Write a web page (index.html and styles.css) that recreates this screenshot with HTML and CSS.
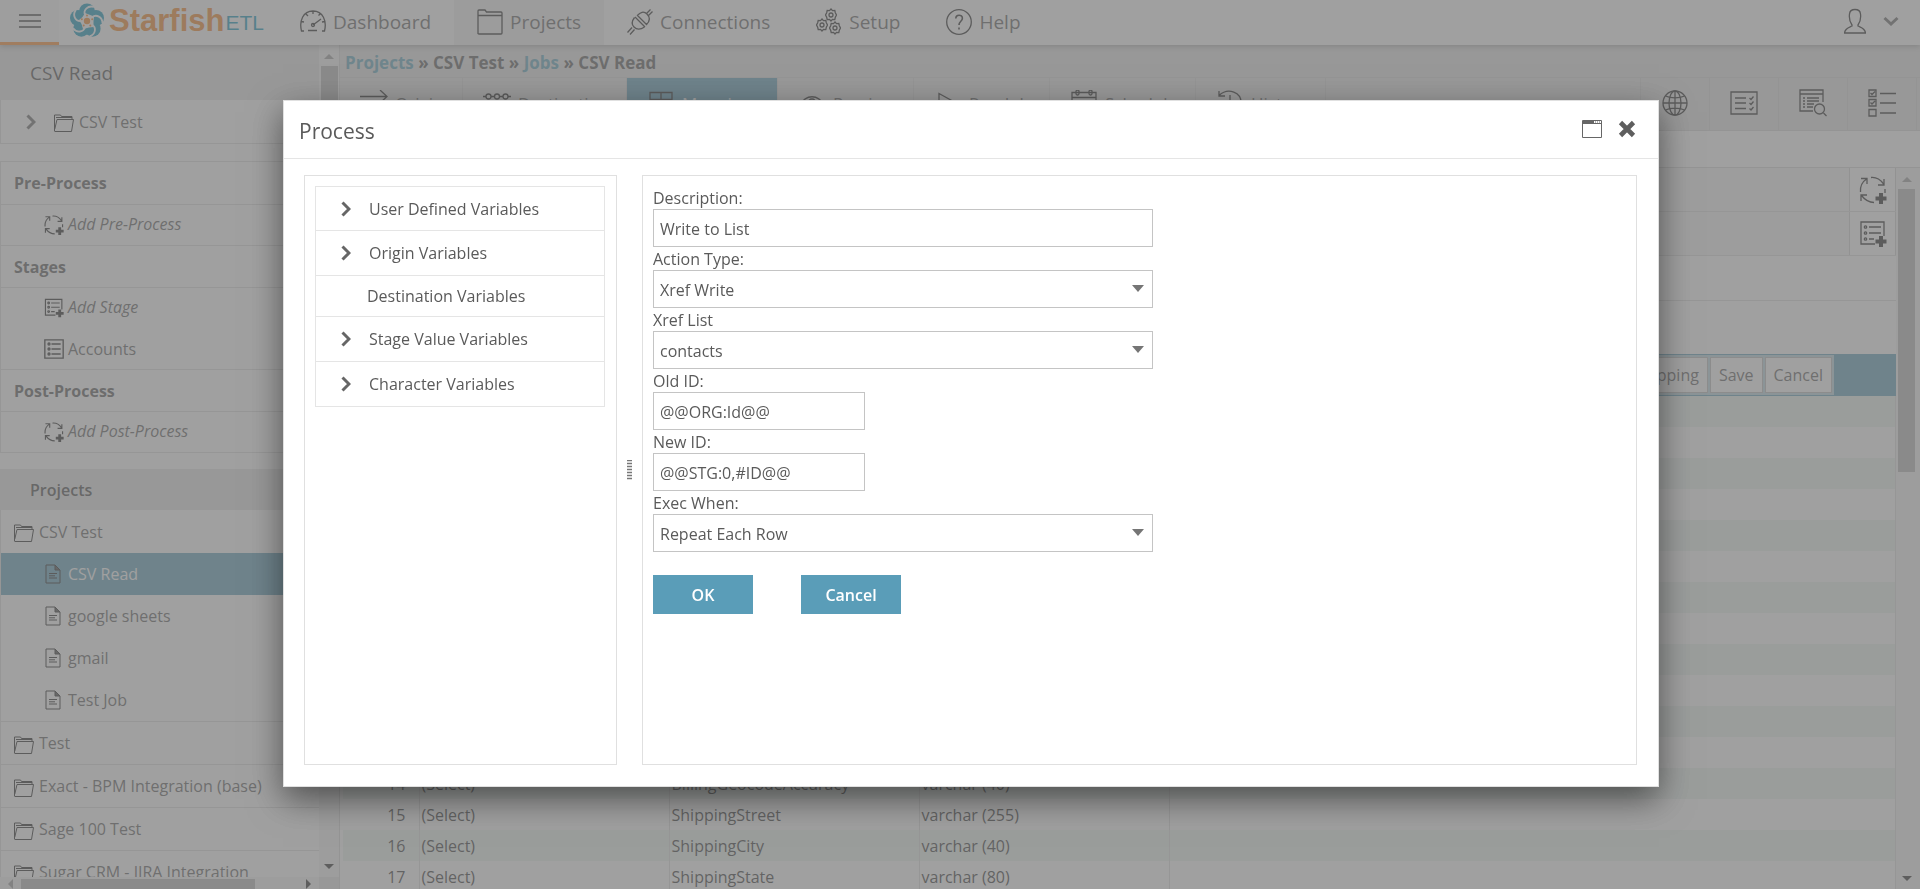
FILE: index.html
```html
<!DOCTYPE html>
<html lang="en">
<head>
<meta charset="utf-8">
<title>Starfish ETL - CSV Read</title>
<link rel="stylesheet" href="styles.css">
</head>
<body>
<svg class="defs" aria-hidden="true">
  <symbol id="i-folder" viewBox="0 0 20 18"><path d="M.5 17V1h6l1 1.500h10.500v3M.5 17.500h17L19.500 5.500H3L.8 15M2 3.500h16" /></symbol>
  <symbol id="i-doc" viewBox="0 0 16 20"><path d="M1 1h9l5 5v13H1zM4 9.500h8M4 11.800h6M4 14h8"/><path fill="#444" d="M10 1v5h5z"/></symbol>
  <symbol id="i-cycle" viewBox="0 0 28 28"><path d="M1.500 16C1 10 3 6 7.500 3M2 2.500h6v5.500M12 1.500c5-.5 9 1.500 12.500 6.500M25 3v6h-6M26 13v4M15 26.500C10 26.500 6 24 2.500 19.500M2 25v-6h6"/><path class="fat" d="M22 17v11M16.500 22.500h11"/></symbol>
  <symbol id="i-stage" viewBox="0 0 24 24"><path d="M1 1h22v22H1zM9 6h11M9 12h11M9 18h11"/><circle cx="6" cy="6" r="1.200"/><circle cx="6" cy="12" r="1.200"/><circle cx="6" cy="18" r="1.200"/></symbol>
  <symbol id="i-stage-add" viewBox="0 0 28 28"><path d="M25 16V2H2v22h14M10 7h12M10 13h12M10 19h5"/><circle cx="6.500" cy="7" r="1.200"/><circle cx="6.500" cy="13" r="1.200"/><circle cx="6.500" cy="19" r="1.200"/><path class="fat" d="M22 16v11M16.500 21.500h11"/></symbol>
  <symbol id="i-chev" viewBox="0 0 10 16"><path d="M1.500 1.500 8 8l-6.500 6.500"/></symbol>
  <symbol id="i-gear" viewBox="0 0 12 14"><path d="M6 1l1.500 1.600 2.300-.2.500 2.300L11.500 7l-1.200 2.300-.5 2.300-2.300-.2L6 13l-1.500-1.600-2.300.2-.5-2.300L.5 7l1.200-2.300.5-2.300 2.300.2z"/><circle cx="6" cy="7" r="2"/></symbol>
</svg>

<div class="app">
  <header class="topbar">
    <button class="menu" aria-label="Menu"><span></span><span></span><span></span></button>
    <a class="logo" href="#">
      <svg width="36" height="36" viewBox="-18 -18 36 36" aria-hidden="true">
        <g fill="#0c93ba">
          <circle r="12"/>
          <circle cx="0" cy="-9.500" r="8"/><circle cx="9" cy="-3" r="8"/><circle cx="5.600" cy="7.700" r="8"/><circle cx="-5.600" cy="7.700" r="8"/><circle cx="-9" cy="-3" r="8"/>
        </g>
        <g fill="none" stroke="#fff" stroke-width="1.800">
          <path id="arm" d="M-2-6C-4-11 1-16 7-14"/>
          <use href="#arm" transform="rotate(72)"/><use href="#arm" transform="rotate(144)"/><use href="#arm" transform="rotate(216)"/><use href="#arm" transform="rotate(288)"/>
        </g>
        <path fill="#fff" d="M-2-8 2-6.500 7-4.500 6.500 0 6.500 6 2 6.500-4 8-5.500 3-8-1-4.500-4z"/>
        <circle r="3.200" fill="#f58220"/>
        <g fill="#f58220"><circle cy="-5.500" r="1"/><circle cx="5.200" cy="-1.700" r="1"/><circle cx="3.300" cy="4.500" r="1"/><circle cx="-3.300" cy="4.500" r="1"/><circle cx="-5.200" cy="-1.700" r="1"/></g>
      </svg>
      <span class="logo-name">Starfish</span><span class="logo-etl">ETL</span>
    </a>
    <nav class="nav">
      <a href="#"><svg class="ic" width="26" height="26" viewBox="0 0 26 26"><path d="M4 22H1.500C-1 12 3 2 13 2s14 10 11.500 20H22M8 21.500h9M13 2v3M6 5l2 2M20 5l-1.500 1.500M1 12.500l3 .5M25 12.500l-3 .5M13 16l8-6"/><circle cx="13" cy="16" r="1.500"/></svg>Dashboard</a>
      <a href="#" class="on"><svg class="ic" width="26" height="26" viewBox="0 0 26 26"><path d="M1 25V2q0-1 1-1h6l1.500 2H24q1 0 1 1v20q0 1-1 1H2q-1 0-1-1M1 6.500h24"/></svg>Projects</a>
      <a href="#"><svg class="ic" width="26" height="26" viewBox="0 0 26 26"><path d="M8 8l10 10M10 6l10 10M10.500 6.500C13 3 17 2 20 5c3 3 3.500 6.500-.5 10.500M7.500 8.500c-3 4-3 7-.5 9.500s6 3 10.500 0M19 5l4.500-4.500M21 7l4.500-4.500M5 18.500.5 23.500M7.500 20.500 3 25.500"/></svg>Connections</a>
      <a href="#"><svg class="ic" width="26" height="28" viewBox="0 0 26 28"><use href="#i-gear" x="9" y="0" width="12" height="14"/><use href="#i-gear" x="0" y="10" width="12" height="14"/><use href="#i-gear" x="13" y="13" width="12" height="14"/></svg>Setup</a>
      <a href="#"><svg class="ic" width="26" height="26" viewBox="0 0 26 26"><circle cx="13" cy="13" r="12.300"/><path stroke-width="1.600" d="M9.800 9.500c0-4.500 6.600-4.300 6.600-.2 0 3-3.400 3-3.400 6.700M13 18.500v2"/></svg>Help</a>
    </nav>
    <button class="user" aria-label="Account">
      <svg class="ic" width="22" height="26" viewBox="0 0 22 26"><path d="M8 17C5 13 5 10 5.500 6c.5-6 10.500-6 11 0 .5 4 .5 7-2.500 11v1c3 1.500 7 2 7.500 7H.500C1 20 5 19.500 8 18z"/></svg>
      <svg class="down" width="16" height="12" viewBox="0 0 16 12"><path d="M1.500 3 8 9l6.500-6"/></svg>
    </button>
  </header>

  <div class="body">
    <aside class="side">
      <div class="side-scroll">
        <h2 class="band">CSV Read</h2>
        <div class="box first">
          <a href="#" class="row tree"><svg class="chev"><use href="#i-chev"/></svg><svg class="ic fold"><use href="#i-folder"/></svg>CSV Test</a>
        </div>
        <div class="box">
          <h3 class="row">Pre-Process</h3>
          <a href="#" class="row sub line"><svg class="ic s20"><use href="#i-cycle"/></svg><i>Add Pre-Process</i></a>
          <h3 class="row line">Stages</h3>
          <a href="#" class="row sub line"><svg class="ic s20"><use href="#i-stage-add"/></svg><i>Add Stage</i></a>
          <a href="#" class="row sub"><svg class="ic s20"><use href="#i-stage"/></svg>Accounts</a>
          <h3 class="row line">Post-Process</h3>
          <a href="#" class="row sub line"><svg class="ic s20"><use href="#i-cycle"/></svg><i>Add Post-Process</i></a>
        </div>
        <h2 class="band small">Projects</h2>
        <div class="projects">
          <a href="#" class="row proj"><svg class="ic fold"><use href="#i-folder"/></svg>CSV Test</a>
          <a href="#" class="row sub sel"><svg class="ic doc"><use href="#i-doc"/></svg>CSV Read</a>
          <a href="#" class="row sub"><svg class="ic doc"><use href="#i-doc"/></svg>google sheets</a>
          <a href="#" class="row sub"><svg class="ic doc"><use href="#i-doc"/></svg>gmail</a>
          <a href="#" class="row sub"><svg class="ic doc"><use href="#i-doc"/></svg>Test Job</a>
          <a href="#" class="row proj line"><svg class="ic fold"><use href="#i-folder"/></svg>Test</a>
          <a href="#" class="row proj line"><svg class="ic fold"><use href="#i-folder"/></svg>Exact - BPM Integration (base)</a>
          <a href="#" class="row proj line"><svg class="ic fold"><use href="#i-folder"/></svg>Sage 100 Test</a>
          <a href="#" class="row proj line"><svg class="ic fold"><use href="#i-folder"/></svg>Sugar CRM - JIRA Integration</a>
        </div>
      </div>
      <div class="vbar"><span class="up"></span><span class="thumb"></span><span class="dn"></span></div>
      <div class="hbar"><span class="lf"></span><span class="thumb"></span><span class="rt"></span></div>
      <div class="corner"></div>
    </aside>

    <main class="main">
      <div class="crumbs"><a href="#">Projects</a> » CSV Test » <a href="#">Jobs</a> » CSV Read</div>
      <div class="tabs">
        <a href="#" class="t-origin"><svg class="ic" width="28" height="28" viewBox="0 0 28 28"><path d="M0 6.500h27M20 0l7 6.500L20 13"/></svg>Origin</a>
        <a href="#" class="t-dest"><svg class="ic" width="28" height="28" viewBox="0 0 28 28"><path d="M0 6.500h3M8 6.500h3.500M16.500 6.500H20M25 6.500h3"/><circle cx="5.500" cy="6.500" r="2.500"/><circle cx="14" cy="6.500" r="2.500"/><circle cx="22.500" cy="6.500" r="2.500"/></svg>Destination</a>
        <a href="#" class="t-map on"><svg class="ic" width="28" height="28" viewBox="0 0 28 28"><path d="M3 2.500h22v20H3zM14 2.500v20M3 9.500h22"/></svg>Mapping</a>
        <a href="#" class="t-prev"><svg class="ic" width="28" height="28" viewBox="0 0 28 28"><path d="M2 15C8 4 20 4 26 15 20 24 8 24 2 15z"/><circle cx="14" cy="13" r="4"/></svg>Preview</a>
        <a href="#" class="t-run"><svg class="ic" width="28" height="28" viewBox="0 0 28 28"><path d="M5 3.500 24 14 5 25z"/></svg>Run Job</a>
        <a href="#" class="t-sch"><svg class="ic" width="28" height="28" viewBox="0 0 28 28"><path d="M2 2.500h24v22H2zM2 7.500h24"/><rect x="6" y="0" width="3" height="5" rx="1.500"/><rect x="19" y="0" width="3" height="5" rx="1.500"/></svg>Schedule</a>
        <a href="#" class="t-hist"><svg class="ic" width="28" height="28" viewBox="0 0 28 28"><path d="M3 5.500C12-3 26 2 25 14s-18 14-22 3M3 1v5h6M14 5v9h6"/></svg>History</a>
        <span class="fill"></span>
        <button class="tool" aria-label="Language"><svg class="ic" width="28" height="28" viewBox="0 0 28 28"><circle cx="14" cy="14" r="12"/><ellipse cx="14" cy="14" rx="6" ry="12"/><path d="M2 14h24M14 2v24M4.500 7c5 2.500 14 2.500 19 0M4.500 21c5-2.500 14-2.500 19 0"/></svg></button>
        <button class="tool" aria-label="Checklist"><svg class="ic" width="28" height="28" viewBox="0 0 28 28"><path d="M1 3h26v22H1zM5 9h11M5 14h11M5 19.500h11M19.500 9l1.500 1.500 2.500-3M19.500 14l1.500 1.500 2.500-3M19.500 19.500l1.500 1.500 2.500-3"/></svg></button>
        <button class="tool" aria-label="Search log"><svg class="ic" width="28" height="28" viewBox="0 0 28 28"><path d="M24 13V1H1v21h13M1 5h23M8 9h12M8 12h12M8 15h7M8 18h6M4 9h2M4 12h2M4 15h2M4 18h2M24.500 24l3 3"/><circle cx="20.500" cy="20" r="5"/></svg></button>
        <button class="tool" aria-label="Tasks"><svg class="ic" width="28" height="28" viewBox="0 0 28 28"><path d="M1 1h7v6.500H1zM1 10.500h7V17H1zM1 20.500h7V27H1zM12 4.500h16M12 14h16M12 24h16M2.500 4l1.500 1.500 3-3M2.500 13.500l1.500 1.500 3-3"/></svg></button>
      </div>
      <div class="strip"></div>
      <div class="pane">
        <div class="pane-main">
          <div class="bar"><button class="add" aria-label="Add process"><svg class="ic" width="28" height="28"><use href="#i-cycle"/></svg></button></div>
          <div class="bar"><button class="add" aria-label="Add stage"><svg class="ic" width="28" height="28"><use href="#i-stage-add"/></svg></button></div>
          <div class="bar plain"></div>
          <div class="head"></div>
          <div class="edit"><div class="edit-in"><button>Clear Mapping</button><button>Save</button><button>Cancel</button></div></div>
          <table class="grid">
            <colgroup><col class="c-n"><col class="c-s"><col class="c-s"><col class="c-s"><col></colgroup>
            <tbody>
              <tr><td>2</td><td>(Select)</td><td></td><td></td><td></td></tr>
              <tr><td>3</td><td>(Select)</td><td></td><td></td><td></td></tr>
              <tr><td>4</td><td>(Select)</td><td></td><td></td><td></td></tr>
              <tr><td>5</td><td>(Select)</td><td></td><td></td><td></td></tr>
              <tr><td>6</td><td>(Select)</td><td></td><td></td><td></td></tr>
              <tr><td>7</td><td>(Select)</td><td></td><td></td><td></td></tr>
              <tr><td>8</td><td>(Select)</td><td></td><td></td><td></td></tr>
              <tr><td>9</td><td>(Select)</td><td></td><td></td><td></td></tr>
              <tr><td>10</td><td>(Select)</td><td></td><td></td><td></td></tr>
              <tr><td>11</td><td>(Select)</td><td></td><td></td><td></td></tr>
              <tr><td>12</td><td>(Select)</td><td></td><td></td><td></td></tr>
              <tr><td>13</td><td>(Select)</td><td></td><td></td><td></td></tr>
              <tr><td>14</td><td>(Select)</td><td>BillingGeocodeAccuracy</td><td>varchar (40)</td><td></td></tr>
              <tr><td>15</td><td>(Select)</td><td>ShippingStreet</td><td>varchar (255)</td><td></td></tr>
              <tr><td>16</td><td>(Select)</td><td>ShippingCity</td><td>varchar (40)</td><td></td></tr>
              <tr><td>17</td><td>(Select)</td><td>ShippingState</td><td>varchar (80)</td><td></td></tr>
            </tbody>
          </table>
        </div>
        <div class="vbar wide"><span class="up"></span><span class="thumb"></span><span class="dn"></span></div>
      </div>
    </main>
  </div>
</div>

<div class="overlay">
  <section class="modal" role="dialog" aria-labelledby="dlg-title">
    <div class="modal-head">
      <h1 id="dlg-title">Process</h1>
      <button aria-label="Maximize"><svg width="20" height="18" viewBox="0 0 20 18"><path fill="none" stroke="#666" d="M.5.500h19v17H.5z"/><path fill="#666" d="M1 1h11v3H1zM13 1.500h1v1h-1zM15 1.500h1v1h-1zM17 1.500h1v1h-1zM1 3h18v1H1z"/></svg></button>
      <button aria-label="Close"><svg width="18" height="18" viewBox="0 0 18 18"><path stroke="#5e5e5e" stroke-width="4.600" d="M2.500 2.500l13 13M15.500 2.500l-13 13"/></svg></button>
    </div>
    <div class="modal-body">
      <div class="panel left">
        <ul class="vars">
          <li><svg class="chev"><use href="#i-chev"/></svg>User Defined Variables</li>
          <li><svg class="chev"><use href="#i-chev"/></svg>Origin Variables</li>
          <li class="leaf">Destination Variables</li>
          <li><svg class="chev"><use href="#i-chev"/></svg>Stage Value Variables</li>
          <li><svg class="chev"><use href="#i-chev"/></svg>Character Variables</li>
        </ul>
      </div>
      <div class="split"><span></span></div>
      <form class="panel form">
        <label for="f-desc">Description:</label>
        <input id="f-desc" value="Write to List">
        <label for="f-act">Action Type:</label>
        <div class="pick"><select id="f-act"><option>Xref Write</option></select></div>
        <label for="f-list">Xref List</label>
        <div class="pick"><select id="f-list"><option>contacts</option></select></div>
        <label for="f-old">Old ID:</label>
        <input id="f-old" class="short" value="@@ORG:Id@@">
        <label for="f-new">New ID:</label>
        <input id="f-new" class="short" value="@@STG:0,#ID@@">
        <label for="f-when">Exec When:</label>
        <div class="pick"><select id="f-when"><option>Repeat Each Row</option></select></div>
        <div class="acts"><button type="button">OK</button><button type="button">Cancel</button></div>
      </form>
    </div>
  </section>
</div>
</body>
</html>
```
FILE: styles.css
```css
* { box-sizing: border-box; }
body {
  margin: 0;
  height: 100vh;
  overflow: hidden;
  font: 17px/22px "Segoe UI", "Open Sans", "Noto Sans", sans-serif;
  color: #5a5a5a;
  background: #fff;
}
h1, h2, h3, ul { margin: 0; padding: 0; font-weight: 400; }
a { color: inherit; text-decoration: none; }
button { font: inherit; color: inherit; border: 0; background: none; padding: 0; }
svg { flex: none; }
.defs { position: absolute; width: 0; height: 0; }
.ic { fill: none; stroke: #1c1c1c; stroke-width: 1.3; }
.ic .fat, .fat { stroke-width: 4; }

.app { display: flex; flex-direction: column; height: 100vh; }

/* top bar */
.topbar { display: flex; height: 45px; flex: none; box-shadow: 0 1px 6px rgba(0, 0, 0, .35); position: relative; background: #fff; }
.menu { width: 59px; display: flex; flex-direction: column; justify-content: center; align-items: center; gap: 4px; border-bottom: 3px solid #ff8a2b; padding-bottom: 1px; background: #f7f7f7; }
.menu span { width: 22px; height: 2px; background: #555; }
.logo { display: flex; align-items: center; width: 218px; padding-left: 10px; padding-bottom: 4px; font-family: "Liberation Sans", Arial, sans-serif; }
.logo-name { font-size: 31px; font-weight: 700; color: #f58220; padding-left: 4px; }
.logo-etl { font-size: 21px; color: #0c93ba; padding: 5px 0 0 1px; }
.nav { display: flex; flex: 1; font-size: 19px; }
.nav a { display: flex; align-items: center; gap: 7px; padding: 0 23px 2px; }
.nav a.on { background: #f0f0f0; }
.user { display: flex; align-items: center; gap: 17px; padding: 0 21px 3px; }
.down { fill: none; stroke: #666; stroke-width: 3; }

.body { flex: 1; display: flex; min-height: 0; }

/* sidebar */
.side { width: 340px; flex: none; display: grid; grid-template: 1fr 12px / 1fr 20px; border-right: 1px solid #d6d6d6; }
.side-scroll { overflow: hidden; min-height: 0; min-width: 0; }
.band { display: flex; align-items: center; height: 55px; padding: 0 30px; background: #e4e4e4; font-size: 19px; font-weight: 500; color: #444; }
.band.small { height: 41px; font-size: 16px; font-weight: 600; }
.box { border: 1px solid #dcdcdc; border-right: 0; margin-bottom: 16px; }
.box.first { border-top: 0; margin-bottom: 17px; }
.row { display: flex; align-items: center; height: 42px; font-size: 16px; white-space: nowrap; padding-left: 13px; }
h3.row { font-weight: 700; color: #555; }
.row.line { border-top: 1px solid #dcdcdc; }
.row.sub { padding-left: 43px; gap: 4px; height: 41px; }
.row.sub.line i { padding-bottom: 3px; }
.row.tree { height: 43px; padding-left: 25px; gap: 5px; }
.row.tree .chev { margin-right: 13px; }
.chev { width: 10px; height: 16px; fill: none; stroke: #666; stroke-width: 3; }
.fold { width: 20px; height: 18px; margin-top: 3px; stroke-width: 1; }
.s20 { width: 20px; height: 20px; stroke-width: 1.6; }
.doc { width: 16px; height: 20px; stroke-width: 1; }
.projects { border-left: 1px solid #dcdcdc; }
.projects .row.sub { height: 42px; padding-left: 44px; gap: 7px; }
.row.proj { height: 43px; gap: 5px; }
.sel { background: #5a9db8; color: #fff; }

/* scroll bars */
.vbar { display: flex; flex-direction: column; align-items: center; background: #f3f3f3; padding: 9px 1px 8px; }
.vbar .up, .vbar .dn { border: 5px solid transparent; }
.vbar .up { border-bottom-color: #999; border-top: 0; }
.vbar .dn { border-top-color: #222; border-bottom: 0; margin-top: auto; }
.vbar .thumb { width: 17px; height: 320px; background: #b4b4b4; margin-top: 7px; }
.hbar { display: flex; align-items: center; background: #f3f3f3; padding: 2px 8px 0; }
.hbar .lf, .hbar .rt { border: 5px solid transparent; }
.hbar .lf { border-right-color: #999; border-left: 0; }
.hbar .rt { border-left-color: #222; border-right: 0; margin-left: auto; }
.hbar .thumb { width: 234px; height: 10px; background: #b4b4b4; margin-left: 8px; }
.corner { background: #e4e4e4; }

/* main area */
.main { flex: 1; min-width: 0; display: flex; flex-direction: column; background: #e4e4e4; }
.crumbs { height: 33px; padding: 7px 5px 0; font-size: 17px; font-weight: 700; color: #555; border-bottom: 1px solid #d6d6d6; }
.crumbs a { color: #5aa5bb; }
.tabs { display: flex; height: 53px; border-bottom: 1px solid #d6d6d6; font-size: 17px; }
.tabs a { display: flex; align-items: center; gap: 7px; padding-left: 20px; border-right: 1px solid #d6d6d6; overflow: hidden; white-space: nowrap; }
.t-origin { width: 123px; }
.t-dest { width: 164px; }
.t-map { width: 151px; }
.t-prev, .t-run { width: 136px; }
.t-sch { width: 146px; }
.t-hist { width: 130px; }
.tabs a.on { background: #5a9db8; color: #fff; }
.fill { flex: 1; border-right: 1px solid #d6d6d6; }
.tool { width: 69px; border-right: 1px solid #d6d6d6; display: flex; align-items: center; justify-content: center; padding-bottom: 2px; }
.tabs .tool:last-child { margin-right: 3px; }
.strip { height: 36px; background: #fff; }
.pane { flex: 1; min-height: 0; display: flex; background: #fff; padding-left: 3px; border-top: 1px solid #d6d6d6; }
.pane-main { flex: 1; min-width: 0; overflow: hidden; }
.bar { height: 44px; display: flex; justify-content: flex-end; border-bottom: 1px solid #dcdcdc; background: #f6f6f6; }
.bar.plain { height: 45px; background: #fff; }
.add { width: 47px; border: solid #cfcfcf; border-width: 0 1px; display: flex; align-items: center; justify-content: center; background: #fff; }
.head { height: 53px; background: #fff; }
.edit { height: 42px; background: #5a9db8; padding: 1px 62px 1px 0; display: flex; }
.edit-in { flex: 1; background: #b9d6e0; display: flex; justify-content: flex-end; gap: 2px; padding: 2px; }
.edit-in button { background: #fff; border: 1px solid #bbb; padding: 0 8px; font-size: 16px; }
.grid { width: 100%; table-layout: fixed; border-collapse: collapse; font-size: 16px; color: #333; }
.c-n { width: 76px; }
.c-s { width: 250px; }
.grid td { height: 31px; padding: 0 2px; border-right: 1px solid #dcdcdc; white-space: nowrap; line-height: 22px; }
.grid td:first-child { text-align: right; padding-right: 13px; }
.grid tr:nth-child(odd) { background: #ebf3ef; }
.vbar.wide { width: 24px; padding-right: 4px; }
.wide .thumb { height: 283px; }

/* dialog */
.overlay { position: fixed; inset: 0; background: rgba(119, 119, 119, .7); padding: 100px 261px 102px 283px; display: flex; }
.modal { flex: 1; min-width: 0; display: flex; flex-direction: column; background: #fff; border: 1px solid #e0e0e0; box-shadow: 0 12px 32px rgba(0, 0, 0, .5); }
.modal-head { display: flex; align-items: center; height: 58px; padding: 0 22px 0 15px; gap: 16px; border-bottom: 1px solid #e5e5e5; }
.modal-head button { display: flex; padding-bottom: 1px; }
.modal-head h1 { flex: 1; font-size: 21px; line-height: 28px; padding-top: 3px; }
.modal-body { flex: 1; display: flex; padding: 16px 21px 21px 20px; min-height: 0; }
.panel { border: 1px solid #e0e0e0; padding: 10px; }
.left { width: 313px; flex: none; padding-right: 11px; }
.vars { list-style: none; border: 1px solid #e5e5e5; font-size: 16px; }
.vars li { display: flex; align-items: center; height: 43px; padding-left: 25px; gap: 18px; }
.vars li + li { border-top: 1px solid #e5e5e5; height: 45px; }
.vars li.leaf + li, .vars li + li { padding-bottom: 1px; }
.vars li + li.leaf { height: 41px; padding-left: 51px; padding-bottom: 0; }
.split { width: 25px; flex: none; display: flex; align-items: center; justify-content: center; }
.split span { width: 5px; height: 20px; background: repeating-linear-gradient(#777 0 1px, #ddd 1px 3px); }
.form { flex: 1; display: flex; flex-direction: column; align-items: flex-start; font-size: 16px; }
.form label { line-height: 21px; padding-top: 2px; }
.form input, .form select { width: 100%; max-width: 500px; height: 38px; border: 1px solid #c4c4c4; border-radius: 0; background: #fff; color: inherit; font: inherit; padding: 1px 6px 0; margin: 0; appearance: none; }
.form input.short { width: 212px; }
.pick { position: relative; width: 100%; max-width: 500px; }
.pick::after { content: ""; position: absolute; right: 9px; top: 15px; border: 6px solid transparent; border-top: 7px solid #757575; border-bottom: 0; pointer-events: none; }
.acts { display: flex; gap: 48px; padding-top: 23px; }
.acts button { width: 100px; height: 39px; background: #5a9db8; color: #fff; font-weight: 600; }
```
